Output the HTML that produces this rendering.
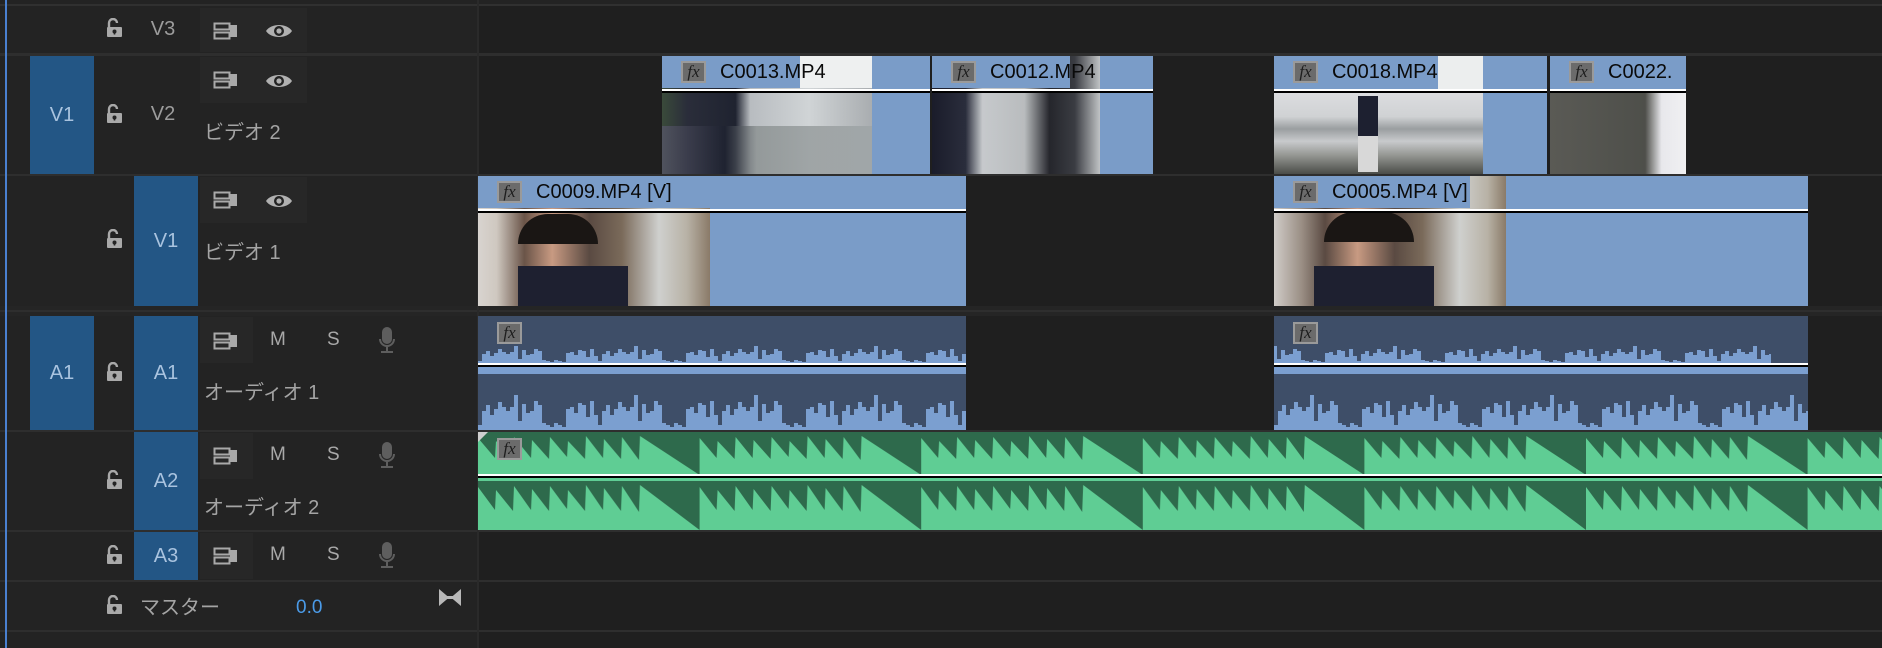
<!DOCTYPE html>
<html><head><meta charset="utf-8"><style>
*{margin:0;padding:0;box-sizing:border-box}
body{width:1882px;height:648px;overflow:hidden;background:#1f1f1f;font-family:"Liberation Sans","Noto Sans CJK JP",sans-serif;position:relative}
.a{position:absolute}
.lp{position:absolute;left:0;width:477px;background:#232323}
.tb{position:absolute;background:#235685;color:#a9c3df;font-size:20px;display:flex;align-items:center;justify-content:center}
.tn{position:absolute;color:#9c9c9c;font-size:20px;width:64px;text-align:center}
.lbl{position:absolute;color:#a4a4a4;font-size:20px;left:204px}
.ic{position:absolute}
.ms{position:absolute;color:#a8a8a8;font-size:19px}
.clip{position:absolute;background:#7a9cc8;overflow:hidden}
.hd{position:absolute;left:0;top:0;height:32px;background:#7a9cc8;color:#0a0a0a;font-size:20px;display:flex;align-items:center;padding-left:58px;white-space:nowrap}
.fx{position:absolute;width:25px;height:22px;background:#6b6b6b;border:2px solid #9a9a9a;color:#1e1e1e;font-style:italic;font-size:17px;font-family:"Liberation Serif",serif;line-height:18px;text-align:center}
.ln{position:absolute;left:0;right:0;height:4px;background:linear-gradient(#fff 0 50%,#000 50%)}
</style></head><body>
<svg width="0" height="0" style="position:absolute">
<defs>
<symbol id="lock" viewBox="0 0 18 20"><path d="M4 9V5a4 4 0 0 1 8 0" fill="none" stroke="#a9a9a9" stroke-width="2.4"/><rect x="2" y="9" width="15" height="10" rx="1" fill="#a9a9a9"/><circle cx="9.5" cy="13.5" r="2" fill="#232323"/><rect x="8.7" y="13.5" width="1.6" height="3" fill="#232323"/></symbol>
<symbol id="sync" viewBox="0 0 26 18"><rect x="1.5" y="1.5" width="15" height="6" fill="none" stroke="#a9a9a9" stroke-width="2"/><rect x="1.5" y="10.5" width="15" height="6" fill="none" stroke="#a9a9a9" stroke-width="2"/><rect x="17" y="3" width="7" height="12" fill="#a9a9a9"/></symbol>
<symbol id="eye" viewBox="0 0 28 18"><path d="M1 9C6 1 22 1 27 9C22 17 6 17 1 9Z" fill="#b0b0b0"/><circle cx="14" cy="9" r="5" fill="#232323"/><circle cx="14" cy="9" r="2.6" fill="#b0b0b0"/></symbol>
<symbol id="mic" viewBox="0 0 18 28"><rect x="4" y="1" width="10" height="17" rx="5" fill="#5e5e5e"/><path d="M2 13a7 7 0 0 0 14 0M9 20v5M3 26h12" fill="none" stroke="#5e5e5e" stroke-width="2"/></symbol>
<pattern id="gw1" x="478" y="0" width="221.6" height="43" patternUnits="userSpaceOnUse"><polygon fill="#5fcd94" points="0,43 0,6 17,26 18,9 35,27 36,5 53,26 54,8 71,27 72,5 89,25 90,9 107,27 108,4 125,26 126,7 143,27 144,5 161,28 162,4 221.6,43"/></pattern>
<pattern id="gw2" x="478" y="0" width="221.6" height="50" patternUnits="userSpaceOnUse"><polygon fill="#5fcd94" points="0,50 0,7 17,30 18,10 35,31 36,6 53,30 54,9 71,31 72,6 89,29 90,10 107,31 108,5 125,30 126,8 143,31 144,6 161,32 162,5 221.6,50"/></pattern>
<pattern id="bw1" x="0" y="0" width="120" height="48" patternUnits="userSpaceOnUse"><path fill="#7b9fd0" d="M0 48V45h4V38h4V35h4V40h4V37h4V33h4V36h4V38h4V36h4V30h4V43h4V34h4V39h4V38h4V33h4V35h4V44h4V45h4V46h4V44h4V45h4V46h4V37h4V36h4V39h4V34h4V35h4V41h4V33h4V40H120V48Z"/></pattern>
<pattern id="bw2" x="0" y="0" width="120" height="57" patternUnits="userSpaceOnUse"><path fill="#7b9fd0" d="M0 57V52h4V38h4V32h4V42h4V36h4V29h4V34h4V38h4V34h4V22h4V48h4V31h4V40h4V38h4V28h4V32h4V50h4V52h4V54h4V50h4V52h4V54h4V36h4V34h4V40h4V30h4V32h4V44h4V28h4V42H120V57Z"/></pattern>
</defs></svg>

<div class="a" style="left:0;top:0;width:1882px;height:4px;background:#232323"></div>
<div class="a" style="left:0;top:4px;width:1882px;height:2px;background:#303030"></div>
<div class="lp" style="top:6px;height:47px"></div>
<div class="a" style="left:0;top:53px;width:1882px;height:3px;background:#2e2e2e"></div>
<div class="lp" style="top:56px;height:118px"></div>
<div class="a" style="left:0;top:174px;width:1882px;height:2px;background:#2e2e2e"></div>
<div class="lp" style="top:176px;height:130px"></div>
<div class="a" style="left:0;top:306px;width:1882px;height:10px;background:#252525"></div>
<div class="a" style="left:0;top:310px;width:1882px;height:2px;background:#2e2e2e"></div>
<div class="lp" style="top:316px;height:114px"></div>
<div class="a" style="left:0;top:430px;width:1882px;height:2px;background:#2e2e2e"></div>
<div class="lp" style="top:432px;height:98px"></div>
<div class="a" style="left:0;top:530px;width:1882px;height:2px;background:#2e2e2e"></div>
<div class="lp" style="top:532px;height:48px"></div>
<div class="a" style="left:0;top:580px;width:1882px;height:2px;background:#2e2e2e"></div>
<div class="lp" style="top:582px;height:48px"></div>
<div class="a" style="left:0;top:630px;width:1882px;height:2px;background:#2e2e2e"></div>
<div class="lp" style="top:632px;height:16px"></div>
<div class="a" style="left:477px;top:0;width:2px;height:648px;background:#2a2a2a"></div>
<div class="a" style="left:5px;top:0;width:2px;height:648px;background:#4a80d0"></div>

<div class="a" style="left:200px;top:8px;width:107px;height:44px;background:#272727"></div>
<div class="a" style="left:200px;top:57px;width:107px;height:46px;background:#272727"></div>
<div class="a" style="left:200px;top:177px;width:107px;height:46px;background:#272727"></div>
<div class="a" style="left:200px;top:317px;width:53px;height:46px;background:#272727"></div>
<div class="a" style="left:200px;top:433px;width:53px;height:46px;background:#272727"></div>
<div class="a" style="left:200px;top:533px;width:53px;height:46px;background:#272727"></div>

<div class="tb" style="left:30px;top:56px;width:64px;height:118px">V1</div>
<div class="tb" style="left:134px;top:176px;width:64px;height:130px">V1</div>
<div class="tb" style="left:30px;top:316px;width:64px;height:114px">A1</div>
<div class="tb" style="left:134px;top:316px;width:64px;height:114px">A1</div>
<div class="tb" style="left:134px;top:432px;width:64px;height:98px">A2</div>
<div class="tb" style="left:134px;top:532px;width:64px;height:48px">A3</div>
<div class="tn" style="left:131px;top:18px">V3</div>
<div class="tn" style="left:131px;top:103px">V2</div>

<svg class="ic" style="left:105px;top:18px" width="18" height="20"><use href="#lock"/></svg>
<svg class="ic" style="left:105px;top:104px" width="18" height="20"><use href="#lock"/></svg>
<svg class="ic" style="left:105px;top:229px" width="18" height="20"><use href="#lock"/></svg>
<svg class="ic" style="left:105px;top:362px" width="18" height="20"><use href="#lock"/></svg>
<svg class="ic" style="left:105px;top:470px" width="18" height="20"><use href="#lock"/></svg>
<svg class="ic" style="left:105px;top:545px" width="18" height="20"><use href="#lock"/></svg>
<svg class="ic" style="left:105px;top:595px" width="18" height="20"><use href="#lock"/></svg>

<svg class="ic" style="left:213px;top:22px" width="26" height="18"><use href="#sync"/></svg>
<svg class="ic" style="left:265px;top:22px" width="28" height="18"><use href="#eye"/></svg>
<svg class="ic" style="left:213px;top:71px" width="26" height="18"><use href="#sync"/></svg>
<svg class="ic" style="left:265px;top:72px" width="28" height="18"><use href="#eye"/></svg>
<svg class="ic" style="left:213px;top:191px" width="26" height="18"><use href="#sync"/></svg>
<svg class="ic" style="left:265px;top:192px" width="28" height="18"><use href="#eye"/></svg>
<div class="lbl" style="top:116px">ビデオ 2</div>
<div class="lbl" style="top:236px">ビデオ 1</div>

<svg class="ic" style="left:213px;top:332px" width="26" height="18"><use href="#sync"/></svg>
<div class="ms" style="left:270px;top:329px">M</div><div class="ms" style="left:327px;top:329px">S</div>
<svg class="ic" style="left:378px;top:326px" width="18" height="28"><use href="#mic"/></svg>
<div class="lbl" style="top:376px">オーディオ 1</div>
<svg class="ic" style="left:213px;top:447px" width="26" height="18"><use href="#sync"/></svg>
<div class="ms" style="left:270px;top:444px">M</div><div class="ms" style="left:327px;top:444px">S</div>
<svg class="ic" style="left:378px;top:441px" width="18" height="28"><use href="#mic"/></svg>
<div class="lbl" style="top:491px">オーディオ 2</div>
<svg class="ic" style="left:213px;top:547px" width="26" height="18"><use href="#sync"/></svg>
<div class="ms" style="left:270px;top:544px">M</div><div class="ms" style="left:327px;top:544px">S</div>
<svg class="ic" style="left:378px;top:541px" width="18" height="28"><use href="#mic"/></svg>

<div class="lbl" style="left:140px;top:591px">マスター</div>
<div class="a" style="left:296px;top:597px;color:#4b9be8;font-size:19px">0.0</div>
<svg class="ic" style="left:438px;top:588px" width="24" height="19"><path d="M1 1L11 9.5L1 18ZM23 1L13 9.5L23 18Z" fill="#b8b8b8"/><rect x="9" y="8" width="6" height="3" fill="#b8b8b8"/></svg>

<div class="clip" style="left:662px;top:56px;width:268px;height:118px">
 <div class="a" style="left:0;top:0;width:210px;height:118px;background:linear-gradient(90deg,#3a4a3a 0,#2a2d3a 12%,#1f2330 35%,#b8bcc0 42%,#d0d4d6 70%,#a9adb0 100%)"></div>
 <div class="a" style="left:0;top:70px;width:210px;height:48px;background:linear-gradient(90deg,#556 0,#1e2230 30%,#8a9090 45%,#9ea4a6 100%);opacity:.8"></div>
 <div class="a" style="left:128px;top:0;width:82px;height:32px;background:#eef0f0"></div>
 <div class="hd" style="width:138px">C0013.MP4</div><div class="fx" style="left:19px;top:5px">fx</div>
 <div class="ln" style="top:33px"></div>
</div>
<div class="clip" style="left:932px;top:56px;width:221px;height:118px">
 <div class="a" style="left:0;top:0;width:168px;height:118px;background:linear-gradient(90deg,#1a1c2a 0,#2a2d3c 20%,#c6c9cc 30%,#b9bcbe 55%,#25262c 70%,#3a3c42 85%,#c0c3c5 100%)"></div>
 <div class="hd" style="width:138px">C0012.MP4</div><div class="fx" style="left:19px;top:5px">fx</div>
 <div class="ln" style="top:33px"></div>
</div>
<div class="clip" style="left:1274px;top:56px;width:273px;height:118px">
 <div class="a" style="left:0;top:36px;width:209px;height:82px;background:linear-gradient(#dcdde0 0,#d0d2d4 30%,#9a9ea0 45%,#c8cacc 60%,#8c8e8a 80%,#4a4c48 100%)"></div>
 <div class="a" style="left:84px;top:40px;width:20px;height:40px;background:#1d2030"></div>
 <div class="a" style="left:84px;top:80px;width:20px;height:36px;background:#d8d8d8"></div>
 <div class="a" style="left:164px;top:0;width:45px;height:36px;background:#eceeee"></div>
 <div class="hd" style="width:164px">C0018.MP4</div><div class="fx" style="left:19px;top:5px">fx</div>
 <div class="ln" style="top:33px"></div>
</div>
<div class="clip" style="left:1550px;top:56px;width:136px;height:118px">
 <div class="a" style="left:0;top:36px;width:136px;height:82px;background:linear-gradient(90deg,#5a5a55 0,#4e4f4a 70%,#e8e8ec 82%,#f0f0f2 100%)"></div>
 <div class="hd" style="width:136px">C0022.</div><div class="fx" style="left:19px;top:5px">fx</div>
 <div class="ln" style="top:33px"></div>
</div>

<div class="clip" style="left:478px;top:176px;width:488px;height:130px">
 <div class="a" style="left:0;top:0;width:232px;height:130px;background:linear-gradient(90deg,#d8d4d0 0,#cfc8c0 8%,#6a5448 20%,#c89a82 32%,#5a4a42 48%,#7a6a5a 62%,#cfd0ce 78%,#b8b2a6 90%,#8a7a68 100%)"></div>
 <div class="a" style="left:40px;top:90px;width:110px;height:40px;background:#1e2030"></div>
 <div class="a" style="left:40px;top:38px;width:80px;height:30px;background:#1a1614;border-radius:40px 40px 0 0"></div>
 <div class="hd" style="width:232px">C0009.MP4 [V]</div><div class="fx" style="left:19px;top:5px">fx</div>
 <div class="ln" style="top:33px"></div>
</div>
<div class="clip" style="left:1274px;top:176px;width:534px;height:130px">
 <div class="a" style="left:0;top:0;width:232px;height:130px;background:linear-gradient(90deg,#d0ccc8 0,#9a8e84 12%,#5a4a42 22%,#c89a82 36%,#5a4a42 52%,#7a6a5a 64%,#cfd0ce 80%,#b8b2a6 92%,#8a7a68 100%)"></div>
 <div class="a" style="left:40px;top:90px;width:120px;height:40px;background:#1e2030"></div>
 <div class="a" style="left:50px;top:36px;width:90px;height:30px;background:#1a1614;border-radius:40px 40px 0 0"></div>
 <div class="hd" style="width:196px">C0005.MP4 [V]</div><div class="fx" style="left:19px;top:5px">fx</div>
 <div class="ln" style="top:33px"></div>
</div>

<div class="a" style="left:478px;top:316px;width:488px;height:114px;background:#3e4e68;overflow:hidden">
 <svg class="a" style="left:0;top:0" width="488" height="48"><rect width="488" height="48" fill="url(#bw1)"/></svg>
 <div class="a" style="left:0;top:50px;width:488px;height:8px;background:#7b9fd0"></div>
 <svg class="a" style="left:0;top:57px" width="488" height="57"><rect width="488" height="57" fill="url(#bw2)"/></svg>
 <div class="ln" style="top:47px"></div>
 <div class="fx" style="left:19px;top:6px">fx</div>
</div>
<div class="a" style="left:1274px;top:316px;width:534px;height:114px;background:#3e4e68;overflow:hidden">
 <svg class="a" style="left:0;top:0" width="534" height="48"><rect x="0" width="534" height="48" fill="url(#bw1)" transform="translate(-37 0)"/></svg>
 <div class="a" style="left:0;top:50px;width:534px;height:8px;background:#7b9fd0"></div>
 <svg class="a" style="left:0;top:57px" width="534" height="57"><rect width="534" height="57" fill="url(#bw2)"/></svg>
 <div class="ln" style="top:47px"></div>
 <div class="fx" style="left:19px;top:6px">fx</div>
</div>

<div class="a" style="left:478px;top:432px;width:1404px;height:98px;background:#2e6a4c;overflow:hidden">
 <svg class="a" style="left:-478px;top:0" width="1882" height="43"><rect x="478" width="1404" height="43" fill="url(#gw1)"/></svg>
 <div class="a" style="left:0;top:43px;width:1404px;height:6px;background:#5fcd94"></div>
 <svg class="a" style="left:-478px;top:48px" width="1882" height="50"><rect x="478" width="1404" height="50" fill="url(#gw2)"/></svg>
 <div class="ln" style="top:42px"></div>
 <div class="fx" style="left:19px;top:6px">fx</div>
 <svg class="a" style="left:0;top:0" width="10" height="10"><path d="M0 0H10L0 10Z" fill="#cfcfcf"/></svg>
</div>
</body></html>
